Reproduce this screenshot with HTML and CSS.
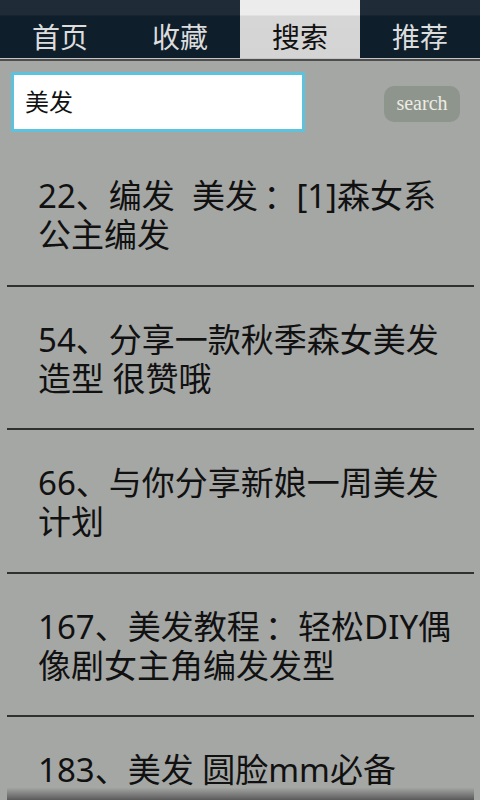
FILE: index.html
```html
<!DOCTYPE html>
<html lang="zh-CN">
<head>
<meta charset="UTF-8">
<meta name="viewport" content="width=device-width, initial-scale=1.0">
<title>搜索</title>
<link rel="stylesheet" href="styles.css">
</head>
<body>
<!-- Tabs -->
<div class="tabs">
  <div class="tab">首页</div>
  <div class="tab">收藏</div>
  <div class="tab active">搜索</div>
  <div class="tab">推荐</div>
</div>

<!-- Search -->
<div class="search-bar">
  <div class="search-input">美发</div>
  <button type="button" class="search-btn">search</button>
</div>

<!-- Results -->
<div class="results">
  <div class="item">22、编发&nbsp;&nbsp;美发&#8201;：[1]森女系公主编发</div>
  <div class="item">54、分享一款秋季森女美发造型 很赞哦</div>
  <div class="item">66、与你分享新娘一周美发计划</div>
  <div class="item">167、美发教程&#8201;：轻松DIY偶像剧女主角编发发型</div>
  <div class="item">183、美发 圆脸mm必备</div>
</div>

<div class="bottom-edge"></div>
</body>
</html>
```

FILE: styles.css
```css
body {
  margin: 0;
  background-color: #a5a7a5;
  font-family: "Noto Sans", "Noto Sans CJK SC", sans-serif;
  color: #111;
  overflow: hidden;
}
.tabs {
  display: flex;
  height: 58px;
  background: linear-gradient(#1f2b37 0, #1f2b37 15px, #0e1f2b 16px, #0e1f2b 100%);
  border-bottom: 1px solid #c4c4c4;
  box-shadow: 0 2px 0 #4e4e4e;
}
.tab {
  flex: 1;
  display: flex;
  align-items: center;
  justify-content: center;
  padding-top: 16px;
  font-size: 28px;
  color: #dcdcdc;
  line-height: 1;
}
.tab.active {
  background: linear-gradient(#ececec 0, #ececec 15px, #d6d6d6 16px, #d4d4d4 100%);
  color: #111;
}
.search-bar {
  display: flex;
  align-items: center;
  justify-content: space-between;
  height: 82px;
  margin-top: 2px;
  padding: 0 20px 0 11px;
  box-sizing: border-box;
}
.search-input {
  width: 294px;
  height: 60px;
  box-sizing: border-box;
  border: 3px solid #5dc3dc;
  background-color: #fff;
  padding-left: 11px;
  font-size: 24px;
  line-height: 54px;
}
.search-btn {
  width: 76px;
  height: 36px;
  border: none;
  border-radius: 10px;
  background-color: #8e958c;
  color: #ecece4;
  font-family: "Liberation Serif", serif;
  font-size: 20px;
  padding: 0 0 2px;
  margin-top: 4px;
}
.results {
  margin: 0 6px 0 7px;
}
.item {
  padding: 33px 12px 30.5px 31px;
  font-size: 33px;
  line-height: 39px;
  border-bottom: 2px solid #303030;
}
.bottom-edge {
  position: fixed;
  left: 7px;
  right: 6px;
  bottom: 0;
  height: 12px;
  background: linear-gradient(#a2a4a2, #5a5a5a);
}
```
